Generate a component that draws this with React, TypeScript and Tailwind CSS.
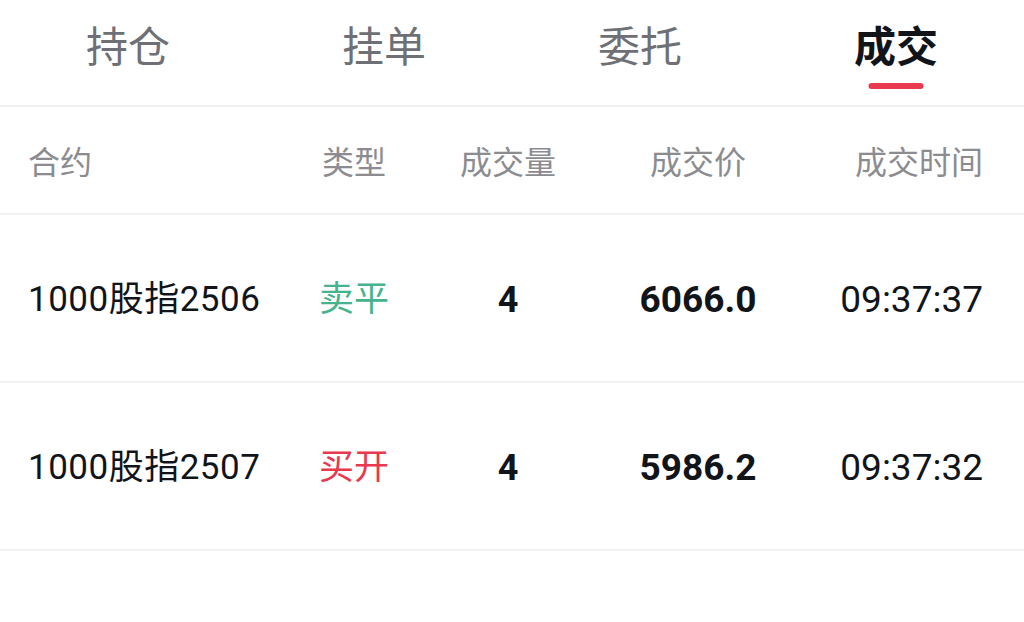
import React from "react";

const tabs = ["持仓", "挂单", "委托", "成交"];

const trades = [
  { name: "1000股指2506", side: "卖平", buy: false, qty: "4", price: "6066.0", time: "09:37:37" },
  { name: "1000股指2507", side: "买开", buy: true, qty: "4", price: "5986.2", time: "09:37:32" },
];

const cols = "grid grid-cols-[272px_108px_200px_180px_195px] items-center pl-[28px] pr-[41px]";

export default function App() {
  const active = 3;
  return (
    <div className="w-[1024px] h-[622px] bg-white overflow-hidden font-['Roboto','Noto_Sans_CJK_SC',sans-serif]">
      {/* tab bar */}
      <div className="flex h-[107px] border-b-2 border-[#f0f0f0]">
        {tabs.map((t, i) => (
          <div key={t} className="relative flex-1 flex justify-center pt-[20px]">
            <span
              className={
                i === active
                  ? "text-[42px] leading-[56px] font-bold text-[#111418]"
                  : "text-[42px] leading-[56px] text-[#6f7075]"
              }
            >
              {t}
            </span>
            {i === active && (
              <div className="absolute left-1/2 -translate-x-1/2 top-[83px] w-[55px] h-[6px] rounded-full bg-[#e8394f]" />
            )}
          </div>
        ))}
      </div>

      {/* header */}
      <div className={`${cols} h-[108px] pt-[6px] border-b-2 border-[#f2f2f2] text-[32px] text-[#8c8c90]`}>
        <div>合约</div>
        <div className="text-center">类型</div>
        <div className="text-center">成交量</div>
        <div className="text-center">成交价</div>
        <div className="text-right">成交时间</div>
      </div>

      {trades.map((r) => (
        <div key={r.name} className={`${cols} h-[168px] pt-[4px] border-b-2 border-[#f2f2f2]`}>
          <div className="text-[35px] text-[#111418] tracking-[0.5px]">{r.name}</div>
          <div className={r.buy ? "text-center text-[35px] text-[#e8394f]" : "text-center text-[35px] text-[#45b38c]"}>
            {r.side}
          </div>
          <div className="text-center text-[36px] font-bold text-[#111418]">{r.qty}</div>
          <div className="text-center text-[37px] font-bold text-[#111418]">{r.price}</div>
          <div className="text-right text-[37px] text-[#111418]">{r.time}</div>
        </div>
      ))}
    </div>
  );
}
